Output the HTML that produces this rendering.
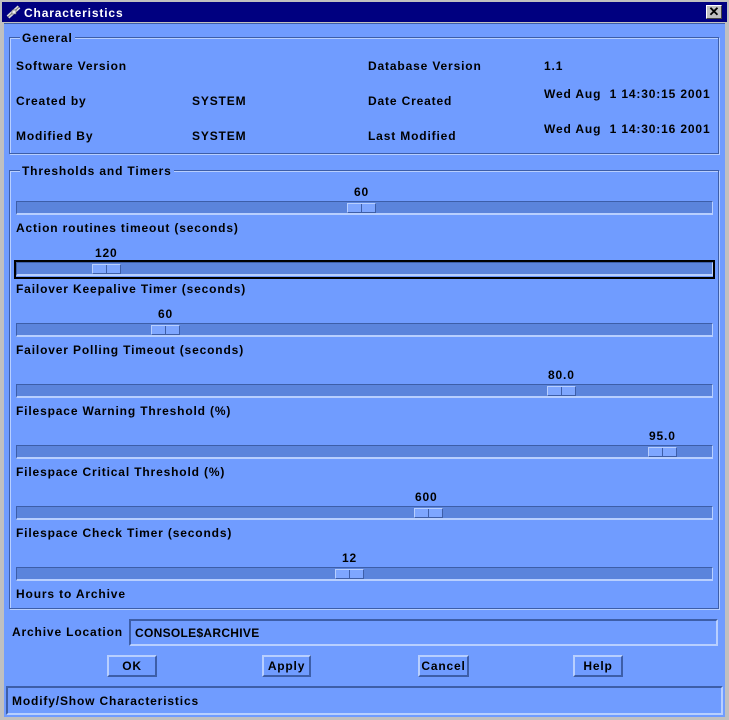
<!DOCTYPE html>
<html><head><style>
*{margin:0;padding:0;box-sizing:border-box}
body{width:729px;height:720px;background:#c0c0c0;position:relative;overflow:hidden;font:bold 12px "Liberation Sans",sans-serif;color:#000}
div,span{position:absolute}
.t{line-height:14px;white-space:pre;letter-spacing:0.85px;margin-top:1px}
.frame{border:1px solid #3d5ea8;box-shadow:inset 1px 1px 0 #b8cfff,1px 1px 0 #b8cfff}
.tr{left:16px;width:697px;height:14px;background:#5b84dc;border-top:1px solid #3d5ea8;border-left:1px solid #3d5ea8;border-bottom:2px solid #b8cfff;border-right:1px solid #b8cfff}
.th{top:1px;width:29px;height:10px;background:#7ea6ff;border:1px solid #b8cfff;border-right-color:#3d5ea8;border-bottom-color:#3d5ea8}
.th:after{content:"";position:absolute;left:13px;top:0;width:1px;height:8px;background:#3d5ea8}
.btn{height:22px;background:#709cff;border:2px solid #3d5ea8;border-top-color:#b8cfff;border-left-color:#b8cfff;text-align:center;line-height:19px;letter-spacing:0.8px}
</style></head><body>
<div style="left:2px;top:2px;width:725px;height:20px;background:#000080"></div>
<svg style="position:absolute;left:6px;top:5px" width="16" height="14" viewBox="0 0 16 14"><path d="M2 12 L13 2" stroke="#ddd" stroke-width="4"/><path d="M2 12 L13 2" stroke="#777" stroke-width="1"/><rect x="6" y="5" width="4" height="4" fill="#eee" stroke="#555" stroke-width=".6"/></svg>
<div class="t" style="left:24px;top:5px;color:#fff">Characteristics</div>
<div style="left:706px;top:5px;width:16px;height:14px;background:#c0c0c0;border:1px solid #fff;border-right-color:#444;border-bottom-color:#444;font:bold 13px 'Liberation Sans';text-align:center;line-height:12px">✕</div>
<div style="left:4px;top:23px;width:721px;height:694px;background:#709cff;border-top:1px solid #3d5ea8"></div>

<div class="frame" style="left:9px;top:37px;width:710px;height:117px"></div>
<div class="t" style="left:20px;top:30px;background:#709cff;padding:0 2px">General</div>
<div class="t" style="left:16px;top:58px">Software Version</div>
<div class="t" style="left:368px;top:58px">Database Version</div>
<div class="t" style="left:544px;top:58px">1.1</div>
<div class="t" style="left:16px;top:93px">Created by</div>
<div class="t" style="left:192px;top:93px">SYSTEM</div>
<div class="t" style="left:368px;top:93px">Date Created</div>
<div class="t" style="left:544px;top:86px">Wed Aug  1 14:30:15 2001</div>
<div class="t" style="left:16px;top:128px">Modified By</div>
<div class="t" style="left:192px;top:128px">SYSTEM</div>
<div class="t" style="left:368px;top:128px">Last Modified</div>
<div class="t" style="left:544px;top:121px">Wed Aug  1 14:30:16 2001</div>

<div class="frame" style="left:9px;top:170px;width:710px;height:439px"></div>
<div class="t" style="left:20px;top:163px;background:#709cff;padding:0 2px">Thresholds and Timers</div>

<div class="t" style="left:354px;top:184px">60</div>
<div class="tr" style="top:201px"><div class="th" style="left:330px"></div></div>
<div class="t" style="left:16px;top:220px">Action routines timeout (seconds)</div>

<div style="left:14px;top:260px;width:701px;height:19px;border:2px solid #000"></div>
<div class="t" style="left:95px;top:245px">120</div>
<div class="tr" style="top:262px"><div class="th" style="left:75px"></div></div>
<div class="t" style="left:16px;top:281px">Failover Keepalive Timer (seconds)</div>

<div class="t" style="left:158px;top:306px">60</div>
<div class="tr" style="top:323px"><div class="th" style="left:134px"></div></div>
<div class="t" style="left:16px;top:342px">Failover Polling Timeout (seconds)</div>

<div class="t" style="left:548px;top:367px">80.0</div>
<div class="tr" style="top:384px"><div class="th" style="left:530px"></div></div>
<div class="t" style="left:16px;top:403px">Filespace Warning Threshold (%)</div>

<div class="t" style="left:649px;top:428px">95.0</div>
<div class="tr" style="top:445px"><div class="th" style="left:631px"></div></div>
<div class="t" style="left:16px;top:464px">Filespace Critical Threshold (%)</div>

<div class="t" style="left:415px;top:489px">600</div>
<div class="tr" style="top:506px"><div class="th" style="left:397px"></div></div>
<div class="t" style="left:16px;top:525px">Filespace Check Timer (seconds)</div>

<div class="t" style="left:342px;top:550px">12</div>
<div class="tr" style="top:567px"><div class="th" style="left:318px"></div></div>
<div class="t" style="left:16px;top:586px">Hours to Archive</div>

<div class="t" style="left:12px;top:624px">Archive Location</div>
<div style="left:129px;top:619px;width:589px;height:27px;border:2px solid #3d5ea8;border-right-color:#b8cfff;border-bottom-color:#b8cfff"></div>
<div class="t" style="left:135px;top:625px;letter-spacing:0.3px">CONSOLE$ARCHIVE</div>

<div class="btn" style="left:107px;top:655px;width:50px">OK</div>
<div class="btn" style="left:262px;top:655px;width:49px">Apply</div>
<div class="btn" style="left:418px;top:655px;width:51px">Cancel</div>
<div class="btn" style="left:573px;top:655px;width:50px">Help</div>

<div style="left:6px;top:686px;width:717px;height:29px;border:2px solid #3d5ea8;border-right-color:#b8cfff;border-bottom-color:#b8cfff"></div>
<div class="t" style="left:12px;top:693px">Modify/Show Characteristics</div>
</body></html>
